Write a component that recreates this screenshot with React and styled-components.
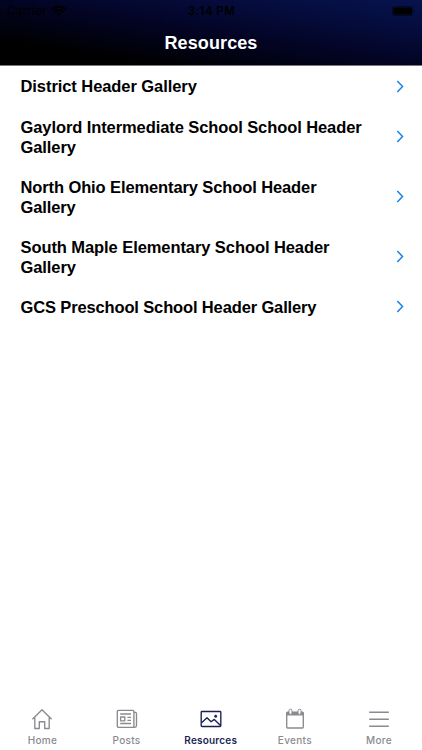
import React from 'react'
import styled, { createGlobalStyle } from 'styled-components'

const galleries = [
    { title: 'District Header Gallery', spacing: -.07 },
    { title: 'Gaylord Intermediate School School Header Gallery', spacing: -.09 },
    { title: 'North Ohio Elementary School Header Gallery', spacing: -.11 },
    { title: 'South Maple Elementary School Header Gallery', spacing: -.08 },
    { title: 'GCS Preschool School Header Gallery', spacing: -.14 },
]

const HomeIcon = () => (
    <Icon viewBox="0 0 22 22">
        <path d="M1.4 11.2 11 1.8l9.6 9.4M3.8 9.4v11.1h4.5v-6.8h5.4v6.8h4.5V9.4" />
    </Icon>
)

const PostsIcon = () => (
    <Icon viewBox="0 0 22 22">
        <path d="M2.3 2.4h14.6q1 0 1 1v15.9H2.9q-1.6 0-1.6-1.6V3.4q0-1 1-1z" />
        <path d="M17.9 4.4h1.4q1.2 0 1.2 1.2v12q0 1.7-1.7 1.7h-1.9M4.2 6h10.8M11.4 9.3H15M11.4 12.3H15M4.2 15.5H15" />
        <path d="M4.6 9h4.2v3.8H4.6z" />
    </Icon>
)

const ResourcesIcon = () => (
    <Icon viewBox="0 0 22 22">
        <rect x="1.2" y="3.5" width="19.6" height="15" rx=".8" />
        <path d="m1.6 14.7 5.4-5 4.1 4.1 3.2-2.4 6.2 6" />
        <circle cx="15.7" cy="8.2" r="1.2" fill="currentColor" strokeWidth=".5" />
    </Icon>
)

const EventsIcon = () => (
    <Icon viewBox="0 0 22 22">
        <path d="M2 5q0-1.6 1.6-1.6h14.8Q20 3.4 20 5v2.6H2z" fill="currentColor" stroke="none" />
        <path d="M2.7 5v14q0 1 1 1h14.6q1 0 1-1V5" />
        <rect x="5" y="1.2" width="3" height="5.2" rx="1.5" fill="#fff" strokeWidth="1" />
        <rect x="14" y="1.2" width="3" height="5.2" rx="1.5" fill="#fff" strokeWidth="1" />
    </Icon>
)

const MoreIcon = () => (
    <Icon viewBox="0 0 22 22">
        <path d="M1.2 4.2h19.6M1.2 11.2h19.6M1.2 18.2h19.6" strokeWidth="1.6" />
    </Icon>
)

const tabs = [
    { label: 'Home', icon: HomeIcon },
    { label: 'Posts', icon: PostsIcon },
    { label: 'Resources', icon: ResourcesIcon, active: true },
    { label: 'Events', icon: EventsIcon },
    { label: 'More', icon: MoreIcon },
]

const App = () => (
    <Screen>
        <GlobalStyle />
        <Header>
            <StatusBar>
                <Carrier>
                    Carrier
                    <Wifi viewBox="0 0 16 12">
                        <path d="M1 4.4a10 10 0 0 1 14 0M3.6 7a6.3 6.3 0 0 1 8.8 0" />
                        <path d="m8 11.5-2.4-2.6a3.5 3.5 0 0 1 4.8 0z" fill="#000" stroke="none" />
                    </Wifi>
                </Carrier>
                <Time>3:14 PM</Time>
                <Battery viewBox="0 0 24 10">
                    <rect x=".5" y=".5" width="20.5" height="9" rx="2" fill="none" stroke="#000" strokeOpacity=".5" />
                    <rect x="1.5" y="1.5" width="18.5" height="7" rx="1" />
                    <path d="M22 3.5q1.5 1.5 0 3z" fillOpacity=".6" />
                </Battery>
            </StatusBar>
            <Title>Resources</Title>
        </Header>
        <List>
            {galleries.map(({ title, spacing }) => (
                <Row key={title}>
                    <RowTitle $spacing={spacing}>{title}</RowTitle>
                    <Chevron viewBox="0 0 8 14">
                        <path d="m1.3 1.6 5.2 5.4-5.2 5.4" />
                    </Chevron>
                </Row>
            ))}
        </List>
        <TabBar>
            {tabs.map(({ label, icon: TabIcon, active }) => (
                <Tab key={label} $active={active}>
                    <TabIcon />
                    <span>{label}</span>
                </Tab>
            ))}
        </TabBar>
    </Screen>
)

const GlobalStyle = createGlobalStyle`
    * {
        box-sizing: border-box;
    }

    body {
        background-color: #fff;
        font-family: "Liberation Sans", Arial, sans-serif;
        margin: 0;
    }
`

const Screen = styled.div`
    display: flex;
    flex-direction: column;
    height: 750px;
    overflow: hidden;
    width: 422px;
`

const Header = styled.header`
    background: linear-gradient(to top right, #000 18%, #030424 50%, #050c3c 75%, #07134f 100%);
    border-bottom: 1px solid #77787f;
    flex: none;
    height: 66px;
`

const StatusBar = styled.div`
    align-items: center;
    color: #000;
    display: grid;
    font-family: Inter, "Liberation Sans", sans-serif;
    font-size: 11.5px;
    grid-template-columns: 1fr auto 1fr;
    height: 22px;
    letter-spacing: .3px;
    padding: 0 6px 0 7px;
`

const Carrier = styled.div`
    align-items: center;
    display: flex;
    gap: 4px;
`

const Wifi = styled.svg`
    fill: none;
    height: 12px;
    stroke: #000;
    stroke-width: 2.2;
    width: 16px;
`

const Time = styled.div`
    font-weight: 600;
    letter-spacing: .45px;
`

const Battery = styled.svg`
    height: 10px;
    justify-self: end;
    width: 24px;
`

const Title = styled.h1`
    color: #fff;
    font-size: 18px;
    font-weight: 700;
    letter-spacing: .1px;
    line-height: 42px;
    margin: 0;
    text-align: center;
`

const List = styled.ul`
    flex: 1;
    list-style: none;
    margin: 0;
    padding: 0;
`

const Row = styled.li`
    align-items: center;
    display: flex;
    justify-content: space-between;
    padding: 10px 18.5px 10px 20.5px;

    &:first-child {
        padding-bottom: 10.5px;
    }
`

const RowTitle = styled.span`
    color: #000;
    font-size: 16.5px;
    font-weight: 700;
    letter-spacing: ${({ $spacing }) => $spacing}px;
    line-height: 20px;
    width: 350px;
`

const Chevron = styled.svg`
    fill: none;
    flex: none;
    height: 15px;
    stroke: #1683ea;
    stroke-width: 1.5;
    width: 8px;
`

const TabBar = styled.nav`
    display: grid;
    flex: none;
    grid-template-columns: repeat(5, 1fr);
    height: 42px;
    padding: 0 .9px 0 .3px;
`

const Tab = styled.div`
    align-items: center;
    color: ${({ $active }) => ($active ? '#1a1f55' : '#8a8a90')};
    display: flex;
    flex-direction: column;
    font-family: Inter, "Liberation Sans", sans-serif;
    font-size: 10px;
    font-weight: ${({ $active }) => ($active ? 600 : 500)};
    letter-spacing: ${({ $active }) => ($active ? .2 : .3)}px;
    line-height: 20px;
`

const Icon = styled.svg`
    fill: none;
    height: 22px;
    stroke: currentColor;
    stroke-linejoin: round;
    stroke-width: 1.35;
    width: 22px;
`

export default App
